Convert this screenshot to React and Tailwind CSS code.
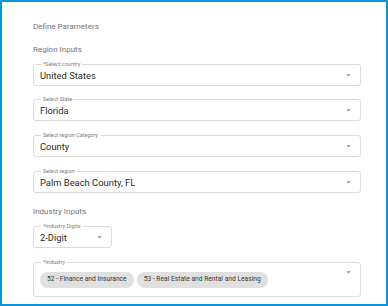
import React from "react";

function Arrow() {
  return (
    <svg width="5" height="3" viewBox="0 0 5 3" className="shrink-0">
      <path d="M0.5 0.3 L4.5 0.3 L2.5 2.6 Z" fill="#8a8a8a" />
    </svg>
  );
}

function SelectBox({ label, value, className = "" }) {
  return (
    <div
      className={`relative h-[22px] rounded-[3px] border border-[#dcdcdc] flex items-center pl-[6px] pr-[9px] ${className}`}
    >
      <span className="absolute left-[7px] top-[-4px] bg-white px-[2px] text-[5.5px] leading-[7px] text-[#808080]">
        {label}
      </span>
      <span className="flex-1 text-[9.4px] leading-[11px] text-[#2a2a2a]">{value}</span>
      <Arrow />
    </div>
  );
}

export default function App() {
  return (
    <div
      className="w-[388px] h-[306px] border-2 border-[#0b95d8] bg-white box-border"
      style={{ fontFamily: "Roboto, 'Liberation Sans', Arial, sans-serif" }}
    >
      <div className="pl-[31px] pt-[20px]">
        <div className="text-[8px] leading-[10px] text-[#757575]">Define Parameters</div>
        <div className="mt-[13px] text-[8px] leading-[10px] text-[#757575]">Region Inputs</div>
        <div className="w-[328px]">
          <SelectBox className="mt-[9px]" label="*Select country" value="United States" />
          <SelectBox className="mt-[13px]" label="Select State" value="Florida" />
          <SelectBox className="mt-[14px]" label="Select region Category" value="County" />
          <SelectBox className="mt-[14px]" label="Select region" value="Palm Beach County, FL" />
        </div>
        <div className="mt-[14px] text-[8px] leading-[10px] text-[#757575]">Industry Inputs</div>
        <SelectBox className="mt-[9px] w-[79px]" label="*Industry Digits" value="2-Digit" />
        <div className="relative mt-[14px] w-[328px] h-[35px] rounded-[3px] border border-[#dcdcdc] flex items-center pl-[6px] pr-[9px]">
          <span className="absolute left-[7px] top-[-4px] bg-white px-[2px] text-[5.5px] leading-[7px] text-[#808080]">
            *Industry
          </span>
          <div className="flex-1 flex gap-[3px]">
            <span className="h-[16px] rounded-full bg-[#e0e0e0] px-[7px] flex items-center text-[6.7px] text-[#3a3a3a]">
              52 - Finance and Insurance
            </span>
            <span className="h-[16px] rounded-full bg-[#e0e0e0] px-[7px] flex items-center text-[6.7px] text-[#3a3a3a]">
              53 - Real Estate and Rental and Leasing
            </span>
          </div>
          <div className="self-start mt-[8px]">
            <Arrow />
          </div>
        </div>
      </div>
    </div>
  );
}
